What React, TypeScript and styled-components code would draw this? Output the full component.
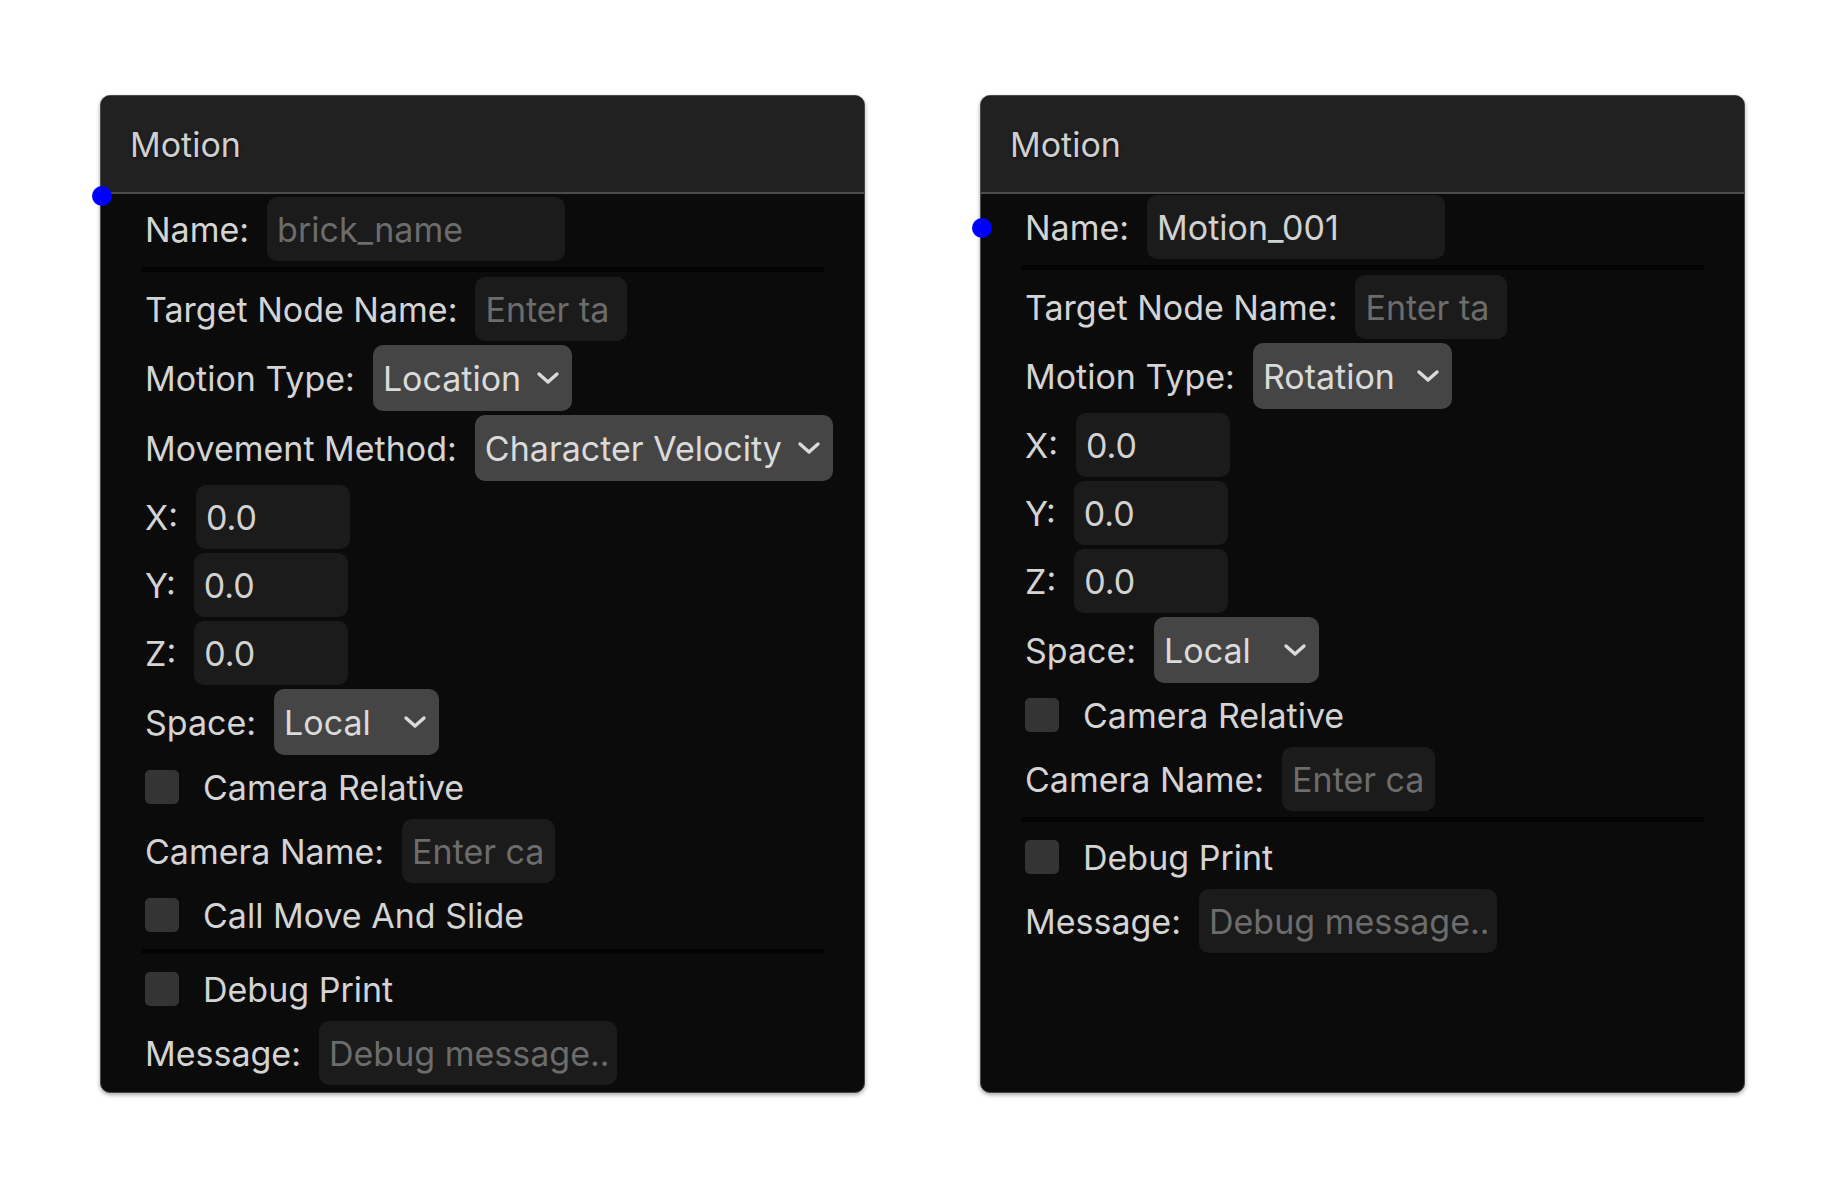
import styled, { createGlobalStyle } from 'styled-components';

const GlobalStyle = createGlobalStyle`
	body {
		margin: 0;
		background: #ffffff;
		font-family: Inter, 'Noto Sans', sans-serif;
	}
`;

const Canvas = styled.div`
	display: flex;
	gap: 115px;
	padding: 95px 0 0 100px;
	min-height: 1194px;
	box-sizing: border-box;
`;

const Node = styled.div`
	position: relative;
	width: 765px;
	height: 998px;
	box-sizing: border-box;
	background: #0b0b0b;
	border: 1px solid #4a4a4a;
	border-radius: 10px;
	box-shadow: 0 2px 4px rgba(0, 0, 0, 0.35);
	display: flex;
	flex-direction: column;
`;

const Header = styled.div`
	height: 96px;
	flex-shrink: 0;
	display: flex;
	align-items: center;
	padding-left: 29px;
	background: #212121;
	border-bottom: 2px solid #4b4b4b;
	border-radius: 9px 9px 0 0;
	color: #cfcfcf;
	font-size: 34px;
	text-shadow: 0 1px 3px rgba(0, 0, 0, 0.7);
`;

const Handle = styled.span<{ $top: number }>`
	position: absolute;
	left: -9px;
	top: ${(p) => p.$top}px;
	width: 20px;
	height: 20px;
	border-radius: 50%;
	background: #0000ff;
`;

const Body = styled.div<{ $top: number }>`
	display: flex;
	flex-direction: column;
	gap: 4px;
	padding: ${(p) => p.$top}px 40px 0;
`;

const Row = styled.div`
	display: flex;
	align-items: center;
	gap: 18px;
	padding-left: 4px;
	color: #d4d4d4;
	font-size: 34px;
	white-space: nowrap;
`;

const CheckRow = styled(Row)`
	height: 56px;
`;

const Divider = styled.div<{ $after: number }>`
	height: 5px;
	margin: 2px 0 ${(p) => p.$after}px;
	background: #040404;
`;

const Field = styled.input<{ $w: number }>`
	width: ${(p) => p.$w}px;
	height: 64px;
	flex-shrink: 0;
	box-sizing: border-box;
	padding: 0 10px;
	border: none;
	outline: none;
	border-radius: 10px;
	background: #1b1b1b;
	color: #d2d2d2;
	font-family: inherit;
	font-size: 34px;
	&::placeholder {
		color: #6c6c6c;
	}
`;

const SelectBox = styled.div<{ $w: number }>`
	width: ${(p) => p.$w}px;
	height: 66px;
	flex-shrink: 0;
	box-sizing: border-box;
	display: flex;
	align-items: center;
	justify-content: space-between;
	padding: 0 12px 0 10px;
	border-radius: 10px;
	background: #454545;
	color: #dadada;
	font-size: 34px;
`;

const Check = styled.span`
	width: 34px;
	height: 34px;
	border-radius: 5px;
	background: #343434;
	margin-right: 6px;
`;

const Chevron = () => (
	<svg width='24' height='14' viewBox='0 0 24 14' fill='none'>
		<path
			d='M3 3l9 8 9-8'
			stroke='#dadada'
			strokeWidth='3.4'
			strokeLinecap='round'
			strokeLinejoin='round'
		/>
	</svg>
);

const Select = ({ value, width }: { value: string; width: number }) => (
	<SelectBox $w={width}>
		<span>{value}</span>
		<Chevron />
	</SelectBox>
);

const Checkbox = ({ label }: { label: string }) => (
	<CheckRow>
		<Check />
		{label}
	</CheckRow>
);

const Axis = ({ axis }: { axis: string }) => (
	<Row>
		{axis}:
		<Field $w={154} defaultValue='0.0' />
	</Row>
);

const MotionNode = ({
	name,
	motionType,
	handleTop,
	bodyTop,
	character,
}: {
	name?: string;
	motionType: string;
	handleTop: number;
	bodyTop: number;
	character?: boolean;
}) => (
	<Node>
		<Handle $top={handleTop} />
		<Header>Motion</Header>
		<Body $top={bodyTop}>
			<Row>
				Name:
				<Field $w={298} placeholder='brick_name' defaultValue={name} />
			</Row>
			<Divider $after={1} />
			<Row>
				Target Node Name:
				<Field $w={152} placeholder='Enter ta' />
			</Row>
			<Row>
				Motion Type:
				<Select value={motionType} width={199} />
			</Row>
			{character && (
				<Row>
					Movement Method:
					<Select value='Character Velocity' width={358} />
				</Row>
			)}
			<Axis axis='X' />
			<Axis axis='Y' />
			<Axis axis='Z' />
			<Row>
				Space:
				<Select value='Local' width={165} />
			</Row>
			<Checkbox label='Camera Relative' />
			<Row>
				Camera Name:
				<Field $w={153} placeholder='Enter ca' />
			</Row>
			{character && <Checkbox label='Call Move And Slide' />}
			<Divider $after={3} />
			<Checkbox label='Debug Print' />
			<Row>
				Message:
				<Field $w={298} placeholder='Debug message..' />
			</Row>
		</Body>
	</Node>
);

export default function App() {
	return (
		<>
			<GlobalStyle />
			<Canvas>
				<MotionNode motionType='Location' handleTop={90} bodyTop={3} character />
				<MotionNode
					name='Motion_001'
					motionType='Rotation'
					handleTop={122}
					bodyTop={1}
				/>
			</Canvas>
		</>
	);
}
